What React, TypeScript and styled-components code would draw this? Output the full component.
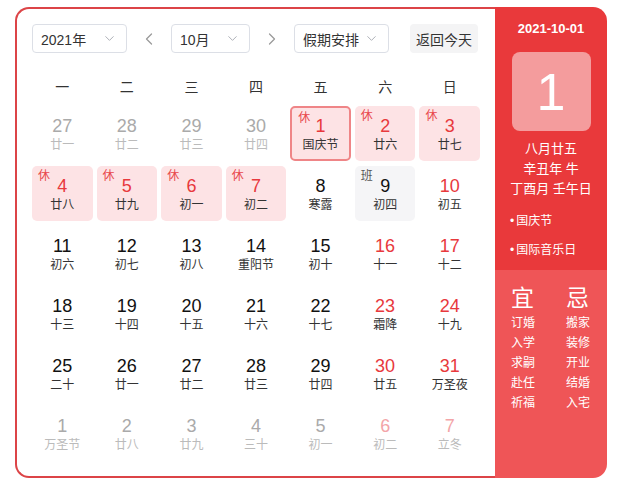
import React from "react"
import styled, { createGlobalStyle } from "styled-components"
import { ChevronDown, ChevronLeft, ChevronRight } from "lucide-react"

const GlobalStyle = createGlobalStyle`
  body {
    margin: 0;
    background: #ffffff;
    font-family: "Liberation Sans", "Noto Sans CJK SC", sans-serif;
  }
`

const Page = styled.div`
  padding: 7px 0 0 15px;
`

const Frame = styled.div`
  display: flex;
  width: 592px;
  height: 471px;
`

const CalendarSide = styled.section`
  box-sizing: border-box;
  width: 480px;
  height: 100%;
  border: 2px solid #dc4447;
  border-right: none;
  border-radius: 14px 0 0 14px;
  padding: 15px 15px 15px 15px;
  background: #ffffff;
`

const Toolbar = styled.div`
  display: flex;
  align-items: center;
  height: 29px;
`

const Select = styled.div<{ $width: number }>`
  box-sizing: border-box;
  display: flex;
  align-items: center;
  justify-content: space-between;
  width: ${(p) => p.$width}px;
  height: 29px;
  padding: 0 9px 0 8px;
  border: 1px solid #dcdfe6;
  border-radius: 4px;
  font-size: 14px;
  color: #333333;
`

const ArrowButton = styled.div`
  display: flex;
  align-items: center;
  justify-content: center;
  width: 44px;
  height: 29px;
  color: #9a9a9a;
`

const TodayButton = styled.div`
  display: flex;
  align-items: center;
  justify-content: center;
  width: 68px;
  height: 29px;
  margin-left: 21px;
  border-radius: 4px;
  background: #f4f4f5;
  font-size: 14px;
  color: #333333;
`

const Grid = styled.div`
  display: grid;
  grid-template-columns: repeat(7, 1fr);
  grid-template-rows: 30px repeat(6, 55px);
  column-gap: 4px;
  row-gap: 5px;
  margin-top: 18px;
`

const WeekDay = styled.div`
  display: flex;
  align-items: center;
  justify-content: center;
  font-size: 14px;
  color: #333333;
`

type Kind = "plain" | "rest" | "work"

const Cell = styled.div<{ $kind: Kind; $selected?: boolean }>`
  position: relative;
  box-sizing: border-box;
  display: flex;
  flex-direction: column;
  align-items: center;
  padding-top: ${(p) => (p.$selected ? 7 : 9)}px;
  border-radius: 5px;
  border: ${(p) => (p.$selected ? "2px solid #ef8587" : "none")};
  background: ${(p) =>
    p.$kind === "rest" ? "#fde3e5" : p.$kind === "work" ? "#f5f5f7" : "transparent"};
`

const Tag = styled.span<{ $kind: Kind }>`
  position: absolute;
  left: 6px;
  top: 3px;
  font-size: 12px;
  line-height: 14px;
  color: ${(p) => (p.$kind === "rest" ? "#e8474b" : "#555555")};
`

const DayNumber = styled.div<{ $tone: string }>`
  font-size: 18px;
  line-height: 22px;
  color: ${(p) => p.$tone};
`

const Lunar = styled.div<{ $muted?: boolean }>`
  font-size: 12px;
  line-height: 16px;
  color: ${(p) => (p.$muted ? "#bbbbbb" : "#333333")};
`

const InfoSide = styled.aside`
  display: flex;
  flex-direction: column;
  width: 112px;
  height: 100%;
  border-radius: 0 14px 14px 0;
  overflow: hidden;
  color: #ffffff;
`

const TodayBlock = styled.div`
  display: flex;
  flex-direction: column;
  align-items: center;
  height: 263px;
  padding-top: 13px;
  box-sizing: border-box;
  background: #e9393b;
`

const DateLine = styled.div`
  font-size: 13px;
  line-height: 18px;
  font-weight: bold;
`

const BigDay = styled.div`
  display: flex;
  align-items: center;
  justify-content: center;
  width: 79px;
  height: 79px;
  margin-top: 14px;
  border-radius: 8px;
  background: rgba(255, 255, 255, 0.5);
  font-size: 52px;
  line-height: 1;
`

const LunarInfo = styled.div`
  margin-top: 8px;
  font-size: 13px;
  line-height: 20px;
  text-align: center;
`

const Festivals = styled.ul`
  align-self: stretch;
  margin: 12px 0 0 0;
  padding: 0 0 0 15px;
  list-style: none;
  display: flex;
  flex-direction: column;
  gap: 9px;
`

const Festival = styled.li`
  font-size: 12px;
  line-height: 20px;
  &::before {
    content: "•";
    margin-right: 2px;
  }
`

const AdviceBlock = styled.div`
  flex: 1;
  display: flex;
  gap: 31px;
  padding: 15px 0 0 16px;
  background: #ef5557;
`

const AdviceColumn = styled.div`
  display: flex;
  flex-direction: column;
  width: 24px;
`

const AdviceTitle = styled.div`
  font-size: 23px;
  line-height: 26px;
  margin-bottom: 2px;
`

const AdviceItem = styled.div`
  font-size: 12px;
  line-height: 20px;
  white-space: nowrap;
`

type Day = {
  n: number
  lunar: string
  muted?: boolean
  red?: boolean
  kind?: Kind
  selected?: boolean
}

const rows: Day[][] = [
  [
    { n: 27, lunar: "廿一", muted: true },
    { n: 28, lunar: "廿二", muted: true },
    { n: 29, lunar: "廿三", muted: true },
    { n: 30, lunar: "廿四", muted: true },
    { n: 1, lunar: "国庆节", red: true, kind: "rest", selected: true },
    { n: 2, lunar: "廿六", red: true, kind: "rest" },
    { n: 3, lunar: "廿七", red: true, kind: "rest" },
  ],
  [
    { n: 4, lunar: "廿八", red: true, kind: "rest" },
    { n: 5, lunar: "廿九", red: true, kind: "rest" },
    { n: 6, lunar: "初一", red: true, kind: "rest" },
    { n: 7, lunar: "初二", red: true, kind: "rest" },
    { n: 8, lunar: "寒露" },
    { n: 9, lunar: "初四", kind: "work" },
    { n: 10, lunar: "初五", red: true },
  ],
  [
    { n: 11, lunar: "初六" },
    { n: 12, lunar: "初七" },
    { n: 13, lunar: "初八" },
    { n: 14, lunar: "重阳节" },
    { n: 15, lunar: "初十" },
    { n: 16, lunar: "十一", red: true },
    { n: 17, lunar: "十二", red: true },
  ],
  [
    { n: 18, lunar: "十三" },
    { n: 19, lunar: "十四" },
    { n: 20, lunar: "十五" },
    { n: 21, lunar: "十六" },
    { n: 22, lunar: "十七" },
    { n: 23, lunar: "霜降", red: true },
    { n: 24, lunar: "十九", red: true },
  ],
  [
    { n: 25, lunar: "二十" },
    { n: 26, lunar: "廿一" },
    { n: 27, lunar: "廿二" },
    { n: 28, lunar: "廿三" },
    { n: 29, lunar: "廿四" },
    { n: 30, lunar: "廿五", red: true },
    { n: 31, lunar: "万圣夜", red: true },
  ],
  [
    { n: 1, lunar: "万圣节", muted: true },
    { n: 2, lunar: "廿八", muted: true },
    { n: 3, lunar: "廿九", muted: true },
    { n: 4, lunar: "三十", muted: true },
    { n: 5, lunar: "初一", muted: true },
    { n: 6, lunar: "初二", muted: true, red: true },
    { n: 7, lunar: "立冬", muted: true, red: true },
  ],
]

const weekDays = ["一", "二", "三", "四", "五", "六", "日"]
const good = ["订婚", "入学", "求嗣", "赴任", "祈福"]
const bad = ["搬家", "装修", "开业", "结婚", "入宅"]

function toneOf(d: Day) {
  if (d.muted) return d.red ? "#f3a5a8" : "#aaaaaa"
  return d.red ? "#e8393d" : "#111111"
}

export default function App() {
  return (
    <Page>
      <GlobalStyle />
      <Frame>
        <CalendarSide>
          <Toolbar>
            <Select $width={95}>
              2021年
              <ChevronDown size={15} strokeWidth={1.5} color="#a8abb2" />
            </Select>
            <ArrowButton>
              <ChevronLeft size={20} strokeWidth={1.5} />
            </ArrowButton>
            <Select $width={79}>
              10月
              <ChevronDown size={15} strokeWidth={1.5} color="#a8abb2" />
            </Select>
            <ArrowButton>
              <ChevronRight size={20} strokeWidth={1.5} />
            </ArrowButton>
            <Select $width={95}>
              假期安排
              <ChevronDown size={15} strokeWidth={1.5} color="#a8abb2" />
            </Select>
            <TodayButton>返回今天</TodayButton>
          </Toolbar>

          <Grid>
            {weekDays.map((w) => (
              <WeekDay key={w}>{w}</WeekDay>
            ))}
            {rows.flat().map((d, i) => {
              const kind = d.kind ?? "plain"
              return (
                <Cell key={i} $kind={kind} $selected={d.selected}>
                  {kind === "rest" && <Tag $kind={kind}>休</Tag>}
                  {kind === "work" && <Tag $kind={kind}>班</Tag>}
                  <DayNumber $tone={toneOf(d)}>{d.n}</DayNumber>
                  <Lunar $muted={d.muted}>{d.lunar}</Lunar>
                </Cell>
              )
            })}
          </Grid>
        </CalendarSide>

        <InfoSide>
          <TodayBlock>
            <DateLine>2021-10-01</DateLine>
            <BigDay>1</BigDay>
            <LunarInfo>
              <div>八月廿五</div>
              <div>辛丑年 牛</div>
              <div>丁酉月 壬午日</div>
            </LunarInfo>
            <Festivals>
              <Festival>国庆节</Festival>
              <Festival>国际音乐日</Festival>
            </Festivals>
          </TodayBlock>
          <AdviceBlock>
            <AdviceColumn>
              <AdviceTitle>宜</AdviceTitle>
              {good.map((g) => (
                <AdviceItem key={g}>{g}</AdviceItem>
              ))}
            </AdviceColumn>
            <AdviceColumn>
              <AdviceTitle>忌</AdviceTitle>
              {bad.map((b) => (
                <AdviceItem key={b}>{b}</AdviceItem>
              ))}
            </AdviceColumn>
          </AdviceBlock>
        </InfoSide>
      </Frame>
    </Page>
  )
}
